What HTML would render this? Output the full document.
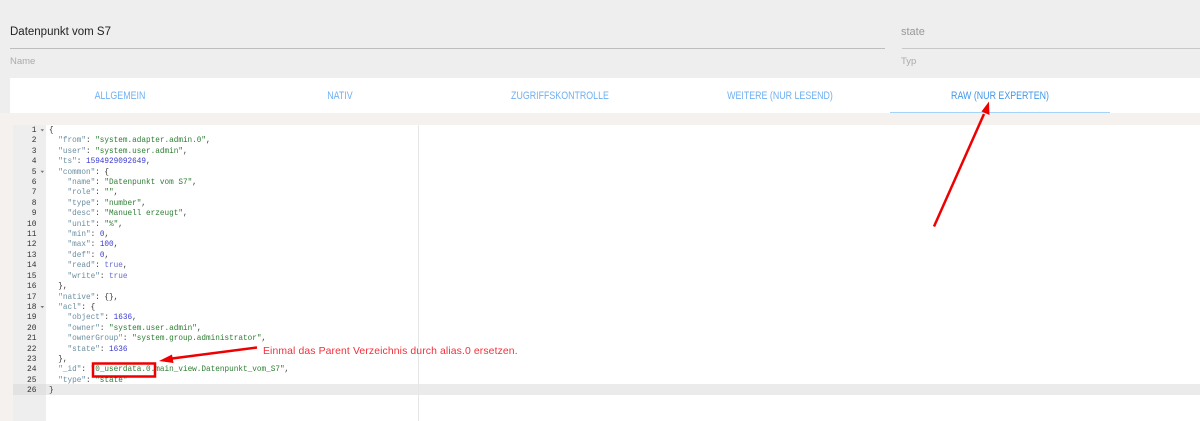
<!DOCTYPE html>
<html lang="de">
<head>
<meta charset="utf-8">
<style>
html,body{margin:0;padding:0}
body{width:1200px;height:421px;overflow:hidden;position:relative;background:#fff;font-family:"Liberation Sans",sans-serif}
.a{position:absolute}
.t{white-space:nowrap}
#code,#nums{font-family:"Liberation Mono",monospace;font-size:8.2px;line-height:10.4px;white-space:pre;filter:blur(.3px);transform-origin:0 0}
#code{left:48.5px;top:126px;color:#333;transform:scaleX(.94)}
#nums{left:12px;width:24.5px;top:126px;text-align:right;color:#333;font-size:7.9px}
.k{color:#6b8ea0}.s{color:#2d7d32}.n{color:#3a3ad0}.b{color:#6a6ad0}
.tab{top:79px;height:35px;line-height:35px;text-align:center;color:#6fb0f2;font-size:10.8px;transform:scaleX(.82);filter:blur(.25px)}
.lbl{filter:blur(.25px)}
</style>
</head>
<body>
<div class="a" style="left:0;top:0;width:1200px;height:78px;background:#eeeeee"></div>
<div class="a" style="left:0;top:78px;width:10px;height:35px;background:#eeeeee"></div>
<div class="a t lbl" style="left:10px;top:26px;font-size:11.5px;color:#222">Datenpunkt vom S7</div>
<div class="a" style="left:10px;top:48px;width:875px;height:1px;background:#bdbdbd"></div>
<div class="a t lbl" style="left:10px;top:56px;font-size:9.5px;color:#aaa">Name</div>
<div class="a t lbl" style="left:901px;top:26px;font-size:11px;color:#999">state</div>
<div class="a" style="left:902px;top:48px;width:298px;height:1px;background:#c8c8c8"></div>
<div class="a t lbl" style="left:901px;top:56px;font-size:9.5px;color:#aaa">Typ</div>

<div class="a" style="left:10px;top:78px;width:1190px;height:35px;background:#fff"></div>
<div class="a t tab" style="left:10px;width:220px">ALLGEMEIN</div>
<div class="a t tab" style="left:230px;width:220px">NATIV</div>
<div class="a t tab" style="left:450px;width:220px">ZUGRIFFSKONTROLLE</div>
<div class="a t tab" style="left:670px;width:220px">WEITERE (NUR LESEND)</div>
<div class="a t tab" style="left:890px;width:220px;color:#3f97ee">RAW (NUR EXPERTEN)</div>
<div class="a" style="left:890px;top:112px;width:220px;height:1px;background:#a5d4fa"></div>

<div class="a" style="left:0;top:113px;width:1200px;height:12px;background:#f4f1ee"></div>
<div class="a" style="left:0;top:113px;width:13px;height:308px;background:#f4f1ee"></div>
<div class="a" style="left:13px;top:125px;width:33px;height:296px;background:#eeeeee"></div>
<div class="a" style="left:46px;top:384px;width:1154px;height:10.5px;background:#ebebeb"></div>
<div class="a" style="left:13px;top:384px;width:33px;height:10.5px;background:#e2e2e2"></div>
<div class="a" style="left:418px;top:125px;width:1px;height:296px;background:#e6e6e6"></div>

<div class="a" id="nums">1
2
3
4
5
6
7
8
9
10
11
12
13
14
15
16
17
18
19
20
21
22
23
24
25
26</div>
<svg class="a" style="left:38.5px;top:125px" width="7" height="200">
<path d="M1.5 4.2h3.6l-1.8 2.2z" fill="#777"/><path d="M1.5 45.8h3.6l-1.8 2.2z" fill="#777"/><path d="M1.5 181h3.6l-1.8 2.2z" fill="#777"/>
</svg>
<div class="a" id="code">{
  <span class="k">"from"</span>: <span class="s">"system.adapter.admin.0"</span>,
  <span class="k">"user"</span>: <span class="s">"system.user.admin"</span>,
  <span class="k">"ts"</span>: <span class="n">1594929092649</span>,
  <span class="k">"common"</span>: {
    <span class="k">"name"</span>: <span class="s">"Datenpunkt vom S7"</span>,
    <span class="k">"role"</span>: <span class="s">""</span>,
    <span class="k">"type"</span>: <span class="s">"number"</span>,
    <span class="k">"desc"</span>: <span class="s">"Manuell erzeugt"</span>,
    <span class="k">"unit"</span>: <span class="s">"%"</span>,
    <span class="k">"min"</span>: <span class="n">0</span>,
    <span class="k">"max"</span>: <span class="n">100</span>,
    <span class="k">"def"</span>: <span class="n">0</span>,
    <span class="k">"read"</span>: <span class="b">true</span>,
    <span class="k">"write"</span>: <span class="b">true</span>
  },
  <span class="k">"native"</span>: {},
  <span class="k">"acl"</span>: {
    <span class="k">"object"</span>: <span class="n">1636</span>,
    <span class="k">"owner"</span>: <span class="s">"system.user.admin"</span>,
    <span class="k">"ownerGroup"</span>: <span class="s">"system.group.administrator"</span>,
    <span class="k">"state"</span>: <span class="n">1636</span>
  },
  <span class="k">"_id"</span>: <span class="s">"0_userdata.0.main_view.Datenpunkt_vom_S7"</span>,
  <span class="k">"type"</span>: <span class="s">"state"</span>
}</div>

<div class="a t lbl" style="left:263px;top:346px;font-size:10.4px;color:#f0303a;letter-spacing:.12px">Einmal das Parent Verzeichnis durch alias.0 ersetzen.</div>

<svg class="a" style="left:0;top:0" width="1200" height="421">
<rect x="93" y="363.5" width="62" height="13" fill="none" stroke="#ee0000" stroke-width="2.5"/>
<path d="M257 347.5 L172 358.5" stroke="#ee0000" stroke-width="2.5" fill="none"/>
<path d="M159 361 L172 354.5 L173.5 363 Z" fill="#ee0000"/>
<path d="M934 226.5 L984 114" stroke="#ee0000" stroke-width="2.5" fill="none"/>
<path d="M989 101.5 L989.5 115 L981.5 111.5 Z" fill="#ee0000"/>
</svg>
</body>
</html>
